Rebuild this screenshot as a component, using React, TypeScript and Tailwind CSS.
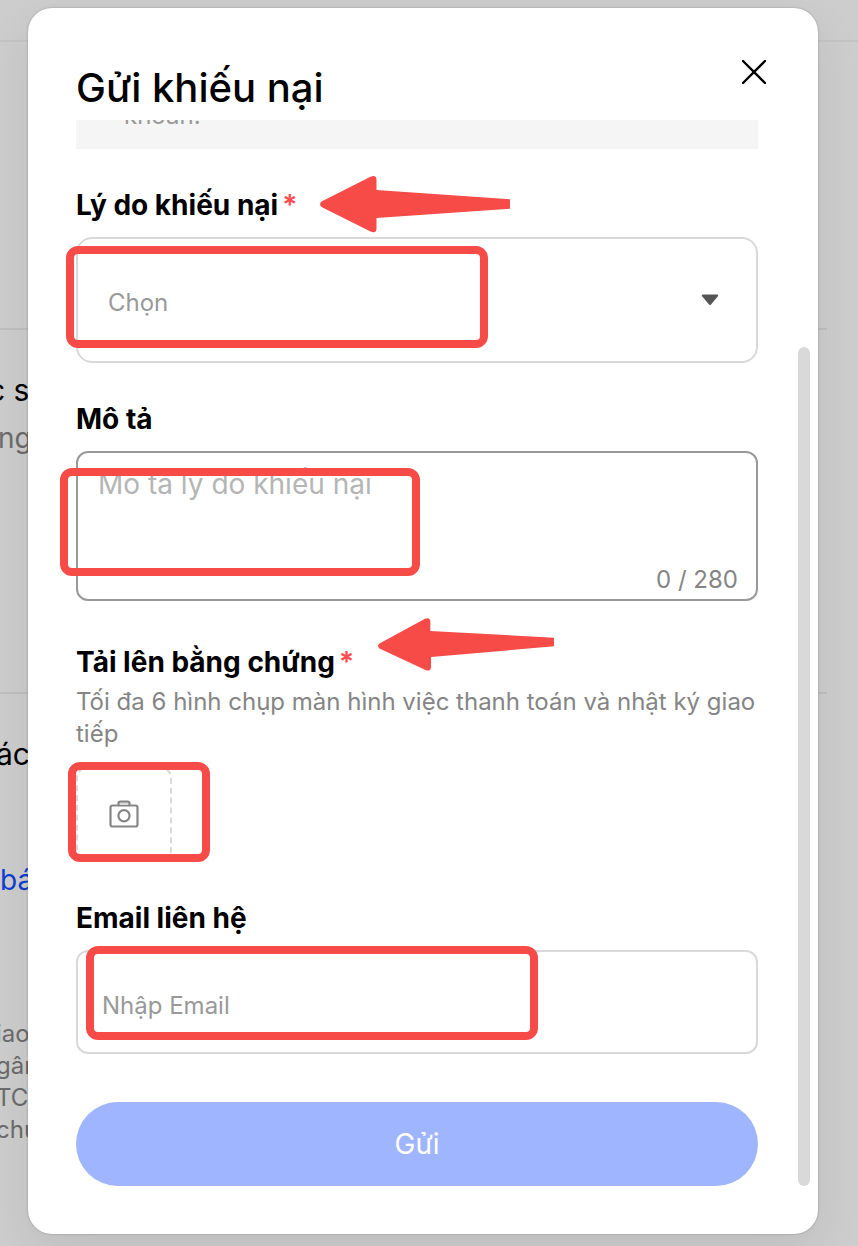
import { useState } from "react";
import type { ReactNode } from "react";

function Highlight({ className }: { className: string }) {
  return (
    <span
      aria-hidden="true"
      className={`pointer-events-none absolute rounded-xl border-8 border-[#f74b48] ${className}`}
    />
  );
}

function FieldLabel({
  htmlFor,
  required = false,
  children,
}: {
  htmlFor: string;
  required?: boolean;
  children: ReactNode;
}) {
  return (
    <label htmlFor={htmlFor} className="block text-[28px] leading-9 font-bold text-black">
      {children}
      {required && <span className="ml-1 font-semibold text-[#ff4d4f]">*</span>}
    </label>
  );
}

function PageBehind() {
  return (
    <div
      aria-hidden="true"
      className="col-start-1 row-start-1 flex min-h-screen flex-col overflow-hidden bg-[#cdcdcd] whitespace-nowrap"
    >
      <div className="h-[42px] border-b-2 border-[#c4c4c4]" />
      <div className="mr-[31px] h-[288px] border-b-2 border-[#bfbfbf]" />
      <div className="mr-[31px] h-[364px] border-b-2 border-[#bfbfbf] pt-10">
        <p className="-ml-3 text-[30px] leading-10 text-black">c s</p>
        <p className="mt-2.5 -ml-0.5 text-[28px] leading-9 text-[#6b6b6b]">ng</p>
      </div>
      <div className="pt-10">
        <p className="-ml-1 text-[30px] leading-10 text-black">ác</p>
        <p className="mt-[88px] text-[28px] leading-9 text-[#0f3fd1]">bá</p>
        <div className="-ml-1 pt-[120px] text-2xl leading-8 text-[#6b6b6b]">
          <p>iao</p>
          <p>gân</p>
          <p>TC</p>
          <p>chu</p>
        </div>
      </div>
    </div>
  );
}

export default function App() {
  const [description, setDescription] = useState("");

  return (
    <div className="grid min-h-screen grid-cols-1 font-[Inter,sans-serif]">
      <PageBehind />
      <div className="col-start-1 row-start-1 pt-2 pr-10 pb-3 pl-7">
        <section
          role="dialog"
          aria-labelledby="dialog-title"
          className="rounded-3xl bg-white pb-12 shadow-[0_0_2px_rgba(0,0,0,0.3),0_16px_48px_rgba(0,0,0,0.08)]"
        >
          <header className="flex items-start justify-between pt-[52px] pr-[52px] pb-1 pl-12">
            <h1 id="dialog-title" className="text-[40px] leading-[56px] font-medium text-black">
              Gửi khiếu nại
            </h1>
            <button type="button" aria-label="Đóng">
              <svg width="24" height="24" viewBox="0 0 24 24" className="block">
                <path d="M1 1L23 23M23 1L1 23" stroke="#000" strokeWidth="2.4" strokeLinecap="round" />
              </svg>
            </button>
          </header>

          <div className="flex">
            <form className="min-w-0 flex-1 pl-12" onSubmit={(e) => e.preventDefault()}>
              <div className="flex h-[29px] items-end overflow-hidden bg-[#f5f5f5] pb-[17px] pl-12 text-2xl leading-8 text-[#999]">
                <p>khoản.</p>
              </div>

              <div className="relative mt-[38px]">
                <FieldLabel htmlFor="reason" required>
                  Lý do khiếu nại
                </FieldLabel>
                <svg
                  aria-hidden="true"
                  width="190"
                  height="57"
                  viewBox="0 0 190 57"
                  className="absolute -top-[11px] left-[244px]"
                >
                  <path
                    d="M1.5 25.5L50.5 .8Q56.5-1.5 56.5 4V14L190 23.3V32.7L56.5 42V52.5Q56.5 58 50.5 55.5L1.5 31Q-1.5 28.3 1.5 25.5Z"
                    fill="#f74b48"
                  />
                </svg>
              </div>
              <div className="relative mt-3.5">
                <select
                  id="reason"
                  defaultValue=""
                  className="block h-[126px] w-full appearance-none rounded-2xl border-2 border-[#d9d9d9] bg-white pt-1.5 pl-[30px] text-2xl text-[#999] outline-none"
                >
                  <option value="">Chọn</option>
                </select>
                <svg
                  aria-hidden="true"
                  width="18"
                  height="12"
                  viewBox="0 0 18 12"
                  className="pointer-events-none absolute top-[57px] right-[39px]"
                >
                  <path d="M1.8 1.5H16.2L9 10Z" fill="#555" stroke="#555" strokeWidth="2" strokeLinejoin="round" />
                </svg>
                <Highlight className="top-[9px] -left-2.5 h-[102px] w-[422px]" />
              </div>

              <div className="mt-[38px]">
                <FieldLabel htmlFor="description">Mô tả</FieldLabel>
              </div>
              <div className="relative mt-3.5 flex h-[150px] flex-col rounded-xl border-2 border-[#999] bg-white pt-[13px] pr-[18px] pb-[3px] pl-5">
                <textarea
                  id="description"
                  maxLength={280}
                  value={description}
                  onChange={(e) => setDescription(e.target.value)}
                  placeholder="Mô tả lý do khiếu nại"
                  className="block min-h-0 w-full flex-1 resize-none text-[28px] leading-9 outline-none placeholder:text-[#b5b5b5]"
                />
                <span className="self-end text-2xl leading-8 text-[#858585]">{description.length} / 280</span>
                <Highlight className="top-[15px] -left-[18px] h-[108px] w-[360px]" />
              </div>

              <div className="relative mt-[43px]">
                <FieldLabel htmlFor="evidence" required>
                  Tải lên bằng chứng
                </FieldLabel>
                <svg
                  aria-hidden="true"
                  width="176"
                  height="53"
                  viewBox="0 0 176 53"
                  className="absolute -top-[26px] left-[302px]"
                >
                  <path
                    d="M1.5 25.5L47 .8Q52.3-1 52.3 4V13L176 19.7V28.3L53 39V49Q53 54 47.5 52L1.5 30.5Q-1.5 28 1.5 25.5Z"
                    fill="#f74b48"
                  />
                </svg>
              </div>
              <p className="mt-1.5 text-2xl leading-8 text-[#858585]">
                Tối đa 6 hình chụp màn hình việc thanh toán và nhật ký giao tiếp
              </p>
              <div className="relative mt-4 size-24">
                <button
                  id="evidence"
                  type="button"
                  aria-label="Tải lên bằng chứng"
                  className="flex size-24 items-center justify-center rounded-xl border-2 border-dashed border-[#d9d9d9]"
                >
                  <svg width="30" height="28" viewBox="0 0 30 28" fill="none" stroke="#858585" strokeWidth="2.2">
                    <rect x="1.5" y="5.5" width="27" height="21" rx="2" />
                    <path
                      d="M9.5 5V3.5Q9.500 1.500 11.500 1.500H18.500Q20.500 1.500 20.500 3.500V5"
                      fill="#d9d9d9"
                    />
                    <circle cx="15" cy="15.8" r="5.6" />
                  </svg>
                </button>
                <Highlight className="-top-1 -left-2 h-[100px] w-[142px]" />
              </div>

              <div className="mt-[38px]">
                <FieldLabel htmlFor="email">Email liên hệ</FieldLabel>
              </div>
              <div className="relative mt-3.5">
                <input
                  id="email"
                  type="email"
                  placeholder="Nhập Email"
                  className="block h-[104px] w-full rounded-xl border-2 border-[#d9d9d9] bg-white pt-1.5 pr-6 pl-6 text-2xl outline-none placeholder:text-[#999]"
                />
                <Highlight className="-top-1 left-2.5 h-[94px] w-[452px]" />
              </div>

              <button
                type="submit"
                className="mt-12 block h-[84px] w-full rounded-full bg-[#a0b5ff] text-[28px] leading-9 text-white"
              >
                Gửi
              </button>
            </form>
            <div aria-hidden="true" className="mt-[227px] mr-2 ml-10 w-3 rounded-full bg-[#d9d9d9]" />
          </div>
        </section>
      </div>
    </div>
  );
}
